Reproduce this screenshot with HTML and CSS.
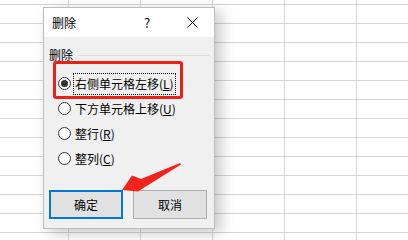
FILE: index.html
```html
<!DOCTYPE html>
<html lang="zh-CN">
<head>
  <meta charset="UTF-8">
  <meta name="viewport" content="width=device-width, initial-scale=1.0">
  <title>删除</title>
  <link rel="stylesheet" href="styles.css">
</head>
<body>
  <div class="sheet">
    <div class="dialog">
      <div class="title-bar">
        <span class="title">删除</span>
        <span class="help">?</span>
        <svg class="close" width="11" height="11" viewBox="0 0 11 11">
          <path d="M0.5 0.5 L10.5 10.5 M10.5 0.5 L0.5 10.5" stroke="#000" stroke-width="1" fill="none"/>
        </svg>
      </div>
      <div class="dialog-body">
        <div class="group-label"><span>删除</span></div>
        <div class="options">
          <label class="option">
            <span class="radio checked"></span>
            <span class="option-text focused">右侧单元格左移(<u>L</u>)</span>
          </label>
          <label class="option">
            <span class="radio"></span>
            <span class="option-text">下方单元格上移(<u>U</u>)</span>
          </label>
          <label class="option">
            <span class="radio"></span>
            <span class="option-text">整行(<u>R</u>)</span>
          </label>
          <label class="option">
            <span class="radio"></span>
            <span class="option-text">整列(<u>C</u>)</span>
          </label>
        </div>
        <div class="buttons">
          <button class="btn btn-default">确定</button>
          <button class="btn">取消</button>
        </div>
      </div>
      <!-- annotation around the selected option -->
      <div class="highlight"></div>
    </div>
    <svg class="arrow" width="408" height="240" viewBox="0 0 408 240">
      <polygon points="122,190 132,175.5 141,179 180,163 181,164.5 145,187 138,191.5" fill="#f2231b"/>
    </svg>
  </div>
</body>
</html>
```

FILE: styles.css
```css
html, body {
  margin: 0;
  padding: 0;
  width: 100%;
  height: 100%;
  overflow: hidden;
}
body {
  font-family: "Noto Sans CJK SC", "Microsoft YaHei", sans-serif;
  font-size: 12px;
  color: #000;
  background-color: #fff;
  background-image:
    linear-gradient(to right, #d6d6d6 1px, transparent 1px),
    linear-gradient(to bottom, #d6d6d6 1px, transparent 1px);
  background-size: 72px 100%, 100% 19px;
  background-position: 68px 0, 0 4px;
}
.sheet {
  position: relative;
  width: 408px;
  height: 240px;
}
.dialog {
  position: absolute;
  left: 43px;
  top: 7px;
  width: 172px;
  height: 222px;
  box-sizing: border-box;
  border: 1px solid #bcbcbc;
  background: #f0f0f0;
  box-shadow: 6px 4px 14px rgba(0, 0, 0, 0.22);
  display: flex;
  flex-direction: column;
}
.title-bar {
  height: 29px;
  background: #fff;
  display: flex;
  align-items: center;
  padding: 0 16px 0 8px;
}
.title {
  flex: 1;
  line-height: 16px;
}
.help {
  width: 6px;
  line-height: 16px;
  font-size: 13px;
}
.close {
  margin-left: 37px;
  display: block;
}
.dialog-body {
  flex: 1;
  padding: 10px 5px 0 5px;
  display: flex;
  flex-direction: column;
}
.group-label {
  display: flex;
  align-items: center;
  height: 16px;
  line-height: 16px;
}
.group-label::after {
  content: "";
  flex: 1;
  height: 1px;
  background: #dcdcdc;
  margin-left: 5px;
}
.options {
  margin-top: 8px;
  padding-left: 9px;
}
.option {
  display: flex;
  align-items: center;
  height: 25px;
}
.radio {
  width: 13px;
  height: 13px;
  box-sizing: border-box;
  border: 1px solid #333;
  border-radius: 50%;
  background: #fff;
  position: relative;
  flex-shrink: 0;
}
.radio.checked::before {
  content: "";
  position: absolute;
  left: 2px;
  top: 2px;
  width: 7px;
  height: 7px;
  border-radius: 50%;
  background: #333;
}
.option-text {
  margin-left: 2px;
  padding: 2px 1px;
  line-height: 16px;
  border: 1px dotted transparent;
  white-space: nowrap;
}
.option-text.focused {
  border-color: #000;
}
.buttons {
  margin-top: 19px;
  display: flex;
  gap: 10px;
}
.btn {
  width: 74px;
  height: 29px;
  box-sizing: border-box;
  border: 1px solid #adadad;
  background: #e1e1e1;
  font-family: inherit;
  font-size: 12px;
  color: #000;
  padding: 0;
}
.btn-default {
  border: 2px solid #0078d7;
}
.highlight {
  position: absolute;
  left: 9px;
  top: 53px;
  width: 130px;
  height: 38px;
  box-sizing: border-box;
  border: 3px solid #ea2118;
  border-radius: 3px;
}
.arrow {
  position: absolute;
  left: 0;
  top: 0;
  pointer-events: none;
}
```
